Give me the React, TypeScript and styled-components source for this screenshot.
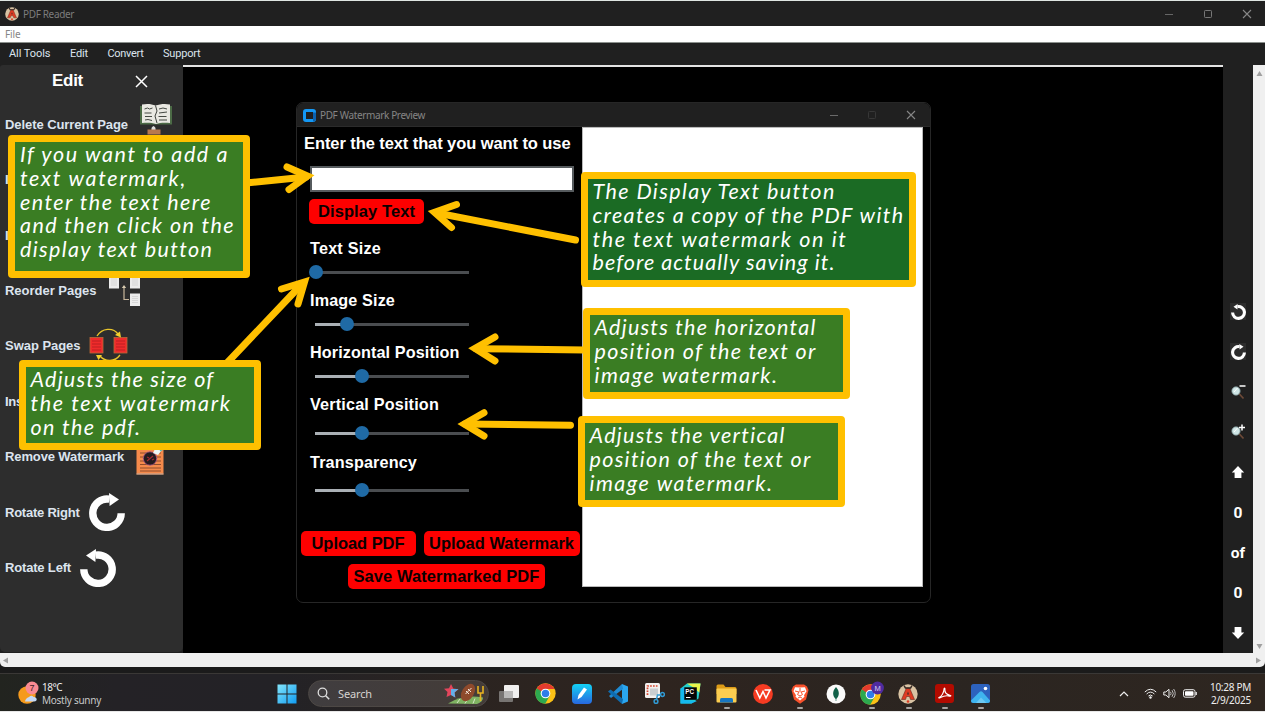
import React, { useLayoutEffect, useRef } from "react";
import styled, { createGlobalStyle } from "styled-components";

const GlobalStyle = createGlobalStyle`
  * { box-sizing: border-box; }
  html, body { margin: 0; padding: 0; background: #000; overflow: hidden; }
`;

const UI = `"Noto Sans", "Open Sans", sans-serif`;
const ARIAL = `"Liberation Sans", Arial, sans-serif`;
const YELLOW = "#ffc000";

/* ---------- text that tracks itself to a given width ---------- */

const TrackedSpan = styled.span`
  display: inline-block;
  white-space: pre;
`;

function Tracked({ width, children }: { width: number; children: string }) {
  const ref = useRef<HTMLSpanElement>(null);
  useLayoutEffect(() => {
    const el = ref.current;
    if (!el) return;
    el.style.letterSpacing = "0px";
    const natural = el.getBoundingClientRect().width;
    el.style.letterSpacing = `${(width - natural) / children.length}px`;
  }, [width, children]);
  return <TrackedSpan ref={ref}>{children}</TrackedSpan>;
}

/* ---------- application shell ---------- */

const Screen = styled.div`
  position: relative;
  width: 1265px;
  height: 712px;
  display: flex;
  flex-direction: column;
  background: #1b1b1b;
  border-top: 1px solid #dfe6e2;
  border-bottom: 1px solid #e8e8e8;
  overflow: hidden;
`;

const TitleBar = styled.header`
  flex: none;
  height: 25px;
  display: flex;
  align-items: center;
  padding: 0 13px 0 5px;
  gap: 4px;
  background: #202020;
  color: #7c7c7c;
  font: 10px/14px ${UI};
`;

const WindowControls = styled.div`
  margin-left: auto;
  display: flex;
  gap: 29px;
`;

const MenuBar = styled.div`
  flex: none;
  height: 17px;
  padding-left: 5px;
  background: #fff;
  border-bottom: 1px solid #8b908c;
  color: #868686;
  font: 10px/17px ${UI};
`;

const Toolbar = styled.nav`
  flex: none;
  height: 22px;
  display: flex;
  align-items: center;
  gap: 19.5px;
  padding-left: 9px;
  background: #202020;
  color: #dce4ee;
  font: 11px/20px Roboto, sans-serif;
`;

const Workspace = styled.main`
  flex: none;
  height: 588px;
  display: flex;
  background: #202020;
`;

const Sidebar = styled.aside`
  width: 183px;
  height: 587px;
  background: #2d2d2d;
  border-radius: 3px 3px 5px 5px;
  font-family: ${ARIAL};
  color: #dce4ee;
`;

const SidebarHeader = styled.div`
  height: 31.7px;
  display: flex;
  align-items: center;
  padding: 1px 0 0 52px;
  gap: 52px;
  font-size: 17px;
  font-weight: 700;
  color: #fff;
`;

const SidebarItem = styled.div<{ $gap: number }>`
  height: 55.4px;
  display: flex;
  align-items: center;
  padding-left: 5px;
  gap: ${(p) => p.$gap}px;
  font-size: 13px;
  font-weight: 700;
`;

const SidebarGlyph = styled.div<{ $shift?: number }>`
  display: flex;
  margin-top: ${(p) => p.$shift ?? 0}px;
`;

const Viewer = styled.section`
  flex: 1;
  background: #000;
  border-top: 2px solid #e4e4e4;
`;

const Rail = styled.div`
  width: 30px;
  padding-top: 226.5px;
  display: flex;
  flex-direction: column;
  background: #202020;
`;

const RailCell = styled.div`
  flex: none;
  height: 40.1px;
  display: flex;
  align-items: center;
  justify-content: center;
  color: #fff;
  font: 700 15.5px/18px Roboto, sans-serif;
`;

const RailCount = styled(RailCell)`
  padding-top: 2px;
`;

const RailTile = styled.div`
  display: flex;
  padding: 0.5px;
  background: #2d2d2d;
`;

const VScroll = styled.div`
  width: 12px;
  display: flex;
  flex-direction: column;
  justify-content: space-between;
  align-items: center;
  padding: 5px 0 3px;
  background: #f0f0f0;
`;

const HScroll = styled.div`
  flex: none;
  height: 14px;
  display: flex;
  justify-content: space-between;
  align-items: center;
  padding: 0 3px;
  background: #f0f0f0;
  border-radius: 0 0 5px 5px;
`;

/* ---------- dialog window ---------- */

const Dialog = styled.div`
  position: absolute;
  left: 296px;
  top: 101px;
  width: 635px;
  height: 501px;
  border: 1px solid #262626;
  border-radius: 7px;
  background: #000;
  overflow: hidden;
`;

const DialogTitle = styled.div`
  height: 24px;
  display: flex;
  align-items: center;
  gap: 4px;
  padding: 1px 14px 0 6px;
  background: #202020;
  border-bottom: 1px solid #2b2b2b;
  color: #858585;
  font: 10px/14px ${UI};
`;

const DialogControls = styled(WindowControls)`
  gap: 28.7px;
`;

const DialogBody = styled.div`
  display: flex;
`;

const Form = styled.div`
  width: 285px;
  display: flex;
  flex-direction: column;
  align-items: flex-start;
  font-family: ${ARIAL};
`;

const Preview = styled.div`
  width: 341px;
  height: 460px;
  background: #fff;
  border: 1px solid #b9b9b9;
`;

const Heading = styled.div`
  height: 33px;
  padding-left: 7px;
  display: flex;
  align-items: center;
  color: #fff;
  font-size: 16.5px;
  font-weight: 700;
`;

const TextInput = styled.input`
  width: 264px;
  height: 26px;
  margin: 6px 0 0 13px;
  border: 2px solid #565b5e;
  outline: none;
  background: #fff;
`;

const RedButton = styled.button<{ $width: number }>`
  width: ${(p) => p.$width}px;
  height: 25px;
  padding: 0;
  border: 0;
  border-radius: 5px;
  background: #fe0000;
  color: #0b0000;
  font: 700 16.5px/25px ${ARIAL};
  text-align: center;
  white-space: nowrap;
`;

const ButtonSlot = styled.div`
  padding: 7px 0 12px 12px;
  height: 44px;
`;

const Field = styled.div<{ $space: number; $gap: number }>`
  display: flex;
  flex-direction: column;
  gap: ${(p) => p.$gap}px;
  padding-left: 13px;
  margin-bottom: ${(p) => p.$space}px;
`;

const FieldLabel = styled.label`
  height: 24px;
  line-height: 24px;
  color: #fff;
  font-size: 16.2px;
  font-weight: 700;
`;

const SliderBox = styled.div`
  height: 24px;
  padding-left: 5px;
  display: flex;
  align-items: center;
`;

const Track = styled.div<{ $width: number; $filled?: boolean }>`
  width: ${(p) => p.$width}px;
  height: 3px;
  background: ${(p) => (p.$filled ? "#aab0b5" : "#4a4d50")};
`;

const Knob = styled.div`
  flex: none;
  width: 14px;
  height: 14px;
  margin: 0 -7px;
  z-index: 1;
  border-radius: 50%;
  background: #1f6aa5;
`;

const UploadRow = styled.div`
  display: flex;
  gap: 8px;
  padding: 29px 0 8px 3.5px;
`;

const SaveRow = styled.div`
  padding-left: 51px;
`;

/* ---------- callouts ---------- */

const Callout = styled.div<{ $x: number; $y: number; $w: number; $h: number; $bg?: string; $pad?: number }>`
  position: absolute;
  left: ${(p) => p.$x}px;
  top: ${(p) => p.$y}px;
  width: ${(p) => p.$w}px;
  height: ${(p) => p.$h}px;
  padding: 1px 0 0 ${(p) => p.$pad ?? 4.5}px;
  border: 7px solid ${YELLOW};
  border-radius: 4px;
  background: ${(p) => p.$bg ?? "#3a7d23"};
  color: #fff;
  font: italic 21.5px/23.8px Lato, "Open Sans", sans-serif;
  display: flex;
  flex-direction: column;
  align-items: flex-start;
`;

const CalloutLine = styled.div`
  height: 23.8px;
`;

const ArrowLayer = styled.svg`
  position: absolute;
  left: 0;
  top: -1px;
  pointer-events: none;
`;

/* ---------- taskbar ---------- */

const Taskbar = styled.footer`
  margin-top: 6px;
  flex: 1;
  position: relative;
  display: flex;
  align-items: center;
  padding-top: 2px;
  border-top: 1px solid #3a3836;
  background: linear-gradient(90deg, #22241f 0, #242226 9%, #232226 22%, #2b2421 36%, #2e241f 52%, #2b2521 75%, #2e2620 100%);
  color: #eee;
  font: 10px/13px ${UI};
`;

const Weather = styled.div`
  width: 268.7px;
  padding-left: 17px;
  display: flex;
  align-items: center;
  gap: 3px;
`;

const Lines = styled.div<{ $end?: boolean }>`
  display: flex;
  flex-direction: column;
  align-items: ${(p) => (p.$end ? "flex-end" : "flex-start")};
`;

const Muted = styled.div`
  color: #c9c9c9;
`;

const AppSlot = styled.div`
  position: relative;
  width: 36.3px;
  height: 35px;
  display: flex;
  align-items: center;
  justify-content: center;
`;

const Indicator = styled.i`
  position: absolute;
  left: 15.5px;
  bottom: 2px;
  width: 6px;
  height: 2px;
  border-radius: 1px;
  background: #a8a5a2;
`;

const SearchPill = styled.div`
  width: 181px;
  height: 27px;
  margin: 0 2px 0 3px;
  padding: 0 3px 0 8px;
  display: flex;
  align-items: center;
  gap: 8px;
  border-radius: 14px;
  border: 1px solid #4d4845;
  background: linear-gradient(90deg, #403d3f, #443c38);
  color: #d6d3d1;
  font-size: 11px;
`;

const SearchArt = styled.svg`
  margin-left: auto;
`;

const Tray = styled.div`
  margin-left: auto;
  padding-right: 14px;
  display: flex;
  align-items: center;
`;

const TrayIcon = styled.div<{ $gap: number }>`
  display: flex;
  margin-right: ${(p) => p.$gap}px;
`;

/* ---------- drawings ---------- */

const ReaderLogo = ({ size = 14 }: { size?: number }) => (
  <svg width={size} height={size} viewBox="0 0 20 20">
    <circle cx="10" cy="10" r="9.7" fill="#d9c3a3" />
    <path d="M3.5 15.5 8.4 4h3.2l4.900 11.500h-4l-1-3h-3l-1 3z" fill="#df3b22" stroke="#6b2b20" strokeWidth=".6" />
    <path d="M9 10.500h2L10 7.400z" fill="#3d2b27" />
    <path d="M7.500 4.200 6 1.500M12.500 4.200 14 1.500M7 4h6" stroke="#342824" strokeWidth="1.500" />
    <circle cx="10" cy="17.500" r="1.300" fill="#df3b22" />
  </svg>
);

const Minimize = ({ color }: { color: string }) => (
  <svg width="10" height="10"><path d="M1 5.500h8" stroke={color} /></svg>
);
const Maximize = ({ color }: { color: string }) => (
  <svg width="10" height="10"><rect x="1.500" y="1.500" width="7" height="7" rx=".8" fill="none" stroke={color} /></svg>
);
const Close = ({ color }: { color: string }) => (
  <svg width="10" height="10"><path d="m1 1 8 8M9 1 1 9" stroke={color} strokeWidth="1.100" /></svg>
);

const Turn = ({ w, h, left }: { w: number; h: number; left?: boolean }) => (
  <svg width={w} height={h} viewBox="0 0 36 38">
    <g transform={left ? "translate(36 0) scale(-1 1)" : undefined}>
      <path d="M20.500 6.200A14.200 14.200 0 1 0 32.200 20.200" fill="none" stroke="#fff" strokeWidth="7.400" />
      <path d="M20 0 30 6.600 20.600 13z" fill="#fff" />
    </g>
  </svg>
);

const BookIcon = () => (
  <svg width="34" height="38" viewBox="0 0 34 38">
    <path d="M1 3h32v18.500H1z" fill="#4c6b46" />
    <path d="M3 1.500c5-1 10-.5 13.500 1C21 1 26 .5 31 1.500V20c-5-.5-10-.5-14 1-4-1.500-9-1.500-14-1z" fill="#e9e8e2" />
    <path d="M16.500 2.500 18 8l-2 5 2 7" stroke="#3d403b" fill="none" />
    <path d="m5.500 6 3-1 2 1 3-1M5.500 10h7M6 13.500h7M6 17l3-.5 4 1M20 6l4-1 4 1M20 10l8-1M19.500 13.500h8M20 17h8" stroke="#454943" fill="none" />
    <path d="M12.500 27q-.5-3 2-4 2.500 1 2 4z" fill="#ddd" />
    <path d="M8.500 26.500h13v5h-13z" fill="#b8784e" />
  </svg>
);

const Sheet = ({ x, y }: { x: number; y: number }) => (
  <g>
    <rect x={x} y={y} width="10" height="12.500" fill="#ececec" />
    <path d={`M${x + 2} ${y + 3}h6M${x + 2} ${y + 5}h6M${x + 2} ${y + 7}h6M${x + 2} ${y + 9}h6`} stroke="#cfcfcf" strokeWidth=".7" />
  </g>
);

const ReorderIcon = () => (
  <svg width="33" height="32" viewBox="0 0 33 32">
    <Sheet x={1} y={1} />
    <Sheet x={22} y={1} />
    <Sheet x={22} y={18.500} />
    <path d="M21 24.500h-5V12" fill="none" stroke="#c9b79c" strokeWidth="1.200" />
    <path d="m13.800 13 2.200-3 2.200 3z" fill="#d8cab0" />
  </svg>
);

const RedSheet = ({ x }: { x: number }) => (
  <g>
    <rect x={x} y="9.500" width="13" height="15.500" fill="#ef2b2b" stroke="#b96a38" strokeWidth=".8" />
    <path d={`M${x + 2} 13h9M${x + 2} 16h9M${x + 2} 19h9M${x + 2} 22h9`} stroke="#b81f22" strokeWidth=".9" />
  </g>
);

const SwapIcon = () => (
  <svg width="40" height="34" viewBox="0 0 40 34">
    <RedSheet x={1} />
    <RedSheet x={25} />
    <path d="M8 8C13 0 24-1 29 6M31 27c-5 7-15 7-20 1" fill="none" stroke="#e9c52b" strokeWidth="1.300" />
    <path d="m26 7 5-3.500 1 6zM7 27l6 0-3.500 5z" fill="#f3cf2e" />
  </svg>
);

const RemoveIcon = () => (
  <svg width="28" height="36" viewBox="0 0 28 36">
    <rect x=".5" y="1" width="27" height="34.500" fill="#f58a4b" />
    <path d="M4 10h21M4 14h21M4 18h21M4 22h21M4 25.500h21M4 29h21M4 32h21" stroke="#8f4c2c" strokeWidth="1.100" />
    <path d="M.5 35h27" stroke="#b9aaa0" />
    <circle cx="14" cy="19.500" r="6.700" fill="#241b1f" stroke="#a8578a" strokeWidth=".8" />
    <path d="m11 22 6-5M11 18l2 1M16 21l2-1" stroke="#a32a30" strokeWidth="1.200" />
    <path d="m17 14 2.500-5h8L22 16z" fill="#eef6f4" />
    <path d="m24 12 3-2" stroke="#55b8b0" strokeWidth="1.500" />
  </svg>
);

const Magnifier = ({ plus }: { plus?: boolean }) => (
  <svg width="16" height="17" viewBox="0 0 16 17">
    <path d="m8.500 10 5 5.500" stroke="#6d4a38" strokeWidth="1.700" />
    <circle cx="6" cy="8" r="4.200" fill="#cfe6e6" stroke="#73898b" strokeWidth=".8" />
    <path d="m4 9 3.500-4" stroke="#fff" />
    <path d={plus ? "M9 4.500h6M12 1.500v6" : "M9.500 3h6"} stroke="#fff" strokeWidth="1.500" />
  </svg>
);

const BlockArrow = ({ down }: { down?: boolean }) => (
  <svg width="14" height="14" viewBox="0 0 14 14">
    <path d={down ? "M3.600 1h6.800v5.500H13.200L7 13 .8 6.500h2.800z" : "M3.600 13h6.800V7.500H13.200L7 1 .8 7.500h2.800z"} fill="#fff" />
  </svg>
);

const Triangle = ({ d }: { d: string }) => (
  <svg width="7" height="7"><path d={d} fill="#a0a0a0" /></svg>
);

const Chrome = () => (
  <svg width="21" height="21" viewBox="0 0 20 20">
    <circle cx="10" cy="10" r="9.700" fill="#fbc116" />
    <path d="M10 10 1.600 5.150A9.700 9.700 0 0 0 9.700 19.700L13.900 12.300z" fill="#2da94f" />
    <path d="M1.600 5.150 6 12l4-2-4-4z" fill="#2da94f" />
    <path d="M1.700 5A9.700 9.700 0 0 1 18.500 5.600H10L6 8z" fill="#e33b2e" />
    <circle cx="10" cy="10" r="4.600" fill="#fff" />
    <circle cx="10" cy="10" r="3.600" fill="#2f7de9" />
  </svg>
);

const appIcons: { icon: React.ReactNode; running?: boolean }[] = [
  {
    icon: (
      <svg width="22" height="20">
        <rect x="1" y="7" width="14" height="11" rx="1" fill="#777472" />
        <rect x="6" y="1" width="15" height="13" rx="1" fill="#f0efee" />
        <path d="M6 7h9v7H6z" fill="#b9b8b7" />
      </svg>
    ),
  },
  { icon: <Chrome /> },
  {
    icon: (
      <svg width="20" height="20" viewBox="0 0 20 20">
        <defs>
          <linearGradient id="note" x1="0" y1="0" x2="0" y2="1">
            <stop offset="0" stopColor="#13d2f5" />
            <stop offset="1" stopColor="#2867df" />
          </linearGradient>
        </defs>
        <rect width="20" height="20" rx="4" fill="url(#note)" />
        <path d="m5.500 15.500 1-4.500 5.500-7.500 3 2-5.500 7.500z" fill="#fff" />
      </svg>
    ),
  },
  {
    icon: (
      <svg width="20" height="20" viewBox="0 0 20 20">
        <path d="m14 0 6 2.500v15L14 20z" fill="#2aa6f0" />
        <path d="M14 0 1 12l2 2L15 5z" fill="#1f8ad2" />
        <path d="M14 20 0 7.500 2.500 5.500 15 15z" fill="#0e6cb0" />
      </svg>
    ),
  },
  {
    icon: (
      <svg width="21" height="21" viewBox="0 0 21 21">
        <rect x="1" y="0" width="15" height="15" rx="1.500" fill="#f2f0ef" />
        <path d="M3.500 12V3h10" fill="none" stroke="#d8462e" strokeWidth="1.700" strokeDasharray="1.700 1.200" />
        <rect x="6" y="5.500" width="8" height="7" fill="#c9cdd0" />
        <circle cx="18.500" cy="11.500" r="1.900" fill="none" stroke="#319bd5" strokeWidth="1.500" />
        <circle cx="12" cy="18.500" r="1.900" fill="none" stroke="#319bd5" strokeWidth="1.500" />
        <path d="m12.500 16.500 1-4.500h3" stroke="#319bd5" fill="none" strokeWidth="1.500" />
      </svg>
    ),
  },
  {
    icon: (
      <svg width="21" height="21" viewBox="0 0 21 21">
        <path d="M7 .5h13.500l-2 15-7 5H.5v-15z" fill="#25cfc9" />
        <path d="M7 .5h13.500l-1.200 9-6-5z" fill="#e9f54a" />
        <path d="M.5 5.500 5 4v13l12 1-5.500 2.500H.5z" fill="#15b9f0" />
        <rect x="4.300" y="4.300" width="12.500" height="12.500" fill="#050505" />
        <text x="5.300" y="10.800" fill="#fff" fontFamily="Liberation Sans, sans-serif" fontWeight="700" fontSize="6.300">PC</text>
        <path d="M6 14.500h4.500" stroke="#fff" />
      </svg>
    ),
  },
  {
    running: true,
    icon: (
      <svg width="21" height="19" viewBox="0 0 21 19">
        <path d="M.5 2q0-1.500 1.500-1.500h5.500L9.500 3H19q1.500 0 1.500 1.500V10H.5z" fill="#dd9b16" />
        <rect x=".5" y="4.500" width="20" height="14" rx="1" fill="#fccd50" />
        <path d="M4 18.500v-3q0-1.500 1.500-1.500h10q1.500 0 1.500 1.500v3z" fill="#1776c2" />
      </svg>
    ),
  },
  {
    icon: (
      <svg width="20" height="20" viewBox="0 0 20 20">
        <circle cx="10" cy="10" r="9.900" fill="#f63b22" />
        <path d="m3 6 3.800 8L10 7.500l3 6.500 4-8h-5.500" fill="none" stroke="#fff" strokeWidth="1.600" />
      </svg>
    ),
  },
  {
    running: true,
    icon: (
      <svg width="18" height="20" viewBox="0 0 18 20">
        <path d="M5 .5h8l3 2L17.500 6 15 15.500l-6 4.300-6-4.300L.5 6 2 2.500z" fill="#f8512c" />
        <path d="M9 3.500 14 3.300l1.500 4-2.500 4 .5 1.500L9 16.500l-4.500-3.700.5-1.500-2.500-4 1.500-4z" fill="#fff" />
        <path d="m4 7 4 1-1.500 2.500L9 12l2.500-1.500L10 8l4-1M9 4v4M7 14l2-1 2 1" stroke="#f8512c" fill="none" strokeWidth="1" />
      </svg>
    ),
  },
  {
    icon: (
      <svg width="20" height="20" viewBox="0 0 20 20">
        <circle cx="10" cy="10" r="9.500" fill="#fafafa" />
        <path d="M10 3c4 4.500 3.500 9 .3 12v2h-.6v-2C6.500 12 6 7.500 10 3z" fill="#116149" />
      </svg>
    ),
  },
  {
    running: true,
    icon: (
      <svg width="26" height="26" viewBox="0 0 26 26">
        <g transform="translate(1 3)"><Chrome /></g>
        <circle cx="18.500" cy="7" r="6.400" fill="#4e2ba0" />
        <text x="18.500" y="9.700" textAnchor="middle" fill="#d9cdf2" fontFamily="Liberation Sans, sans-serif" fontSize="7.500">M</text>
      </svg>
    ),
  },
  { running: true, icon: <ReaderLogo size={20} /> },
  {
    running: true,
    icon: (
      <svg width="19" height="19" viewBox="0 0 19 19">
        <rect width="19" height="19" rx="3" fill="#b30b00" />
        <path d="M4 13.500c2.500-1 5-5 5-8.500 0-1.300 1-1.300.9 0-.3 3 1.600 5.500 5 6.200 1.400.3 1.200 1.100-.2.900-3.500-.8-6-.3-9.200 1.400-1.400.8-2.200.4-1.500 0z" fill="none" stroke="#fff" strokeWidth="1.100" />
      </svg>
    ),
  },
  {
    running: true,
    icon: (
      <svg width="19" height="19" viewBox="0 0 19 19">
        <rect width="19" height="19" rx="2.500" fill="#2d62bd" />
        <path d="M0 16.500 8.500 8q1.500-1.500 3 0l7.500 8.500q0 2.500-2.500 2.500h-14Q0 19 0 16.500z" fill="#3fb4ee" />
        <path d="m5 19 5-5.500 5.500 5.500z" fill="#6cc8f2" />
        <circle cx="14.500" cy="4.500" r="1.800" fill="#fff" />
      </svg>
    ),
  },
];

const arrows = [
  { shaft: "M246 183 306 177", head: "M287 167 307.500 176 289 189.500" },
  { shaft: "M575.500 240 437 213", head: "M456.500 204.500 434.500 212.300 451.500 227.500" },
  { shaft: "M226 364 301 285", head: "M281.500 289 304.500 282 298 304" },
  { shaft: "M585 350 476 348.700", head: "M495 337 475 348.500 495 361" },
  { shaft: "M570.500 425.300 465 424", head: "M484 412.700 464.300 424 484 436" },
];

const callouts: { x: number; y: number; w: number; h: number; bg?: string; pad?: number; lines: [string, number][] }[] = [
  { x: 8, y: 134, w: 242, h: 143, pad: 5, lines: [["If you want to add a", 209], ["text watermark,", 167], ["enter the text here", 192], ["and then click on the", 215], ["display text button", 192]] },
  { x: 19, y: 359, w: 242, h: 90, lines: [["Adjusts the size of", 184], ["the text watermark", 201], ["on the pdf.", 111]] },
  { x: 581, y: 171, w: 335, h: 115, bg: "#1b6b24", lines: [["The Display Text button", 242], ["creates a copy of the PDF with", 312], ["the text watermark on it", 255], ["before actually saving it.", 243]] },
  { x: 583, y: 307, w: 267, h: 91, lines: [["Adjusts the horizontal", 222], ["position of the text or", 222], ["image watermark.", 184]] },
  { x: 578, y: 415, w: 267, h: 91, lines: [["Adjusts the vertical", 196], ["position of the text or", 222], ["image watermark.", 184]] },
];

const fields = [
  { label: "Text Size", text: 71, at: 1, space: 4, gap: 0 },
  { label: "Image Size", text: 85, at: 31.5, filled: true, space: 4, gap: 0 },
  { label: "Horizontal Position", text: 149.5, at: 46.5, filled: true, space: 4, gap: 0 },
  { label: "Vertical Position", text: 129, at: 46.5, filled: true, space: 5, gap: 5 },
  { label: "Transparency", text: 107, at: 46.5, filled: true, space: 0, gap: 4 },
];

const sidebarItems: { label: string; width: number; gap: number; icon?: React.ReactNode; shift?: number }[] = [
  { label: "Delete Current Page", width: 123, gap: 11, icon: <BookIcon />, shift: -5 },
  { label: "I", width: 4, gap: 0 },
  { label: "I", width: 4, gap: 0 },
  { label: "Reorder Pages", width: 91.5, gap: 11, icon: <ReorderIcon />, shift: 0 },
  { label: "Swap Pages", width: 75.5, gap: 8.5, icon: <SwapIcon />, shift: -2 },
  { label: "Ins", width: 18, gap: 0 },
  { label: "Remove Watermark", width: 119, gap: 12, icon: <RemoveIcon />, shift: 0 },
  { label: "Rotate Right", width: 74.5, gap: 9, icon: <Turn w={36} h={38} /> },
  { label: "Rotate Left", width: 66, gap: 9, icon: <Turn w={36} h={38} left /> },
];

export default function App() {
  return (
    <>
      <GlobalStyle />
      <Screen>
        <TitleBar>
          <ReaderLogo />
          <Tracked width={51}>PDF Reader</Tracked>
          <WindowControls>
            <Minimize color="#666" />
            <Maximize color="#777" />
            <Close color="#888" />
          </WindowControls>
        </TitleBar>
        <MenuBar><Tracked width={15.5}>File</Tracked></MenuBar>
        <Toolbar>
          <Tracked width={41.5}>All Tools</Tracked>
          <Tracked width={18}>Edit</Tracked>
          <Tracked width={36}>Convert</Tracked>
          <Tracked width={37.5}>Support</Tracked>
        </Toolbar>

        <Workspace>
          <Sidebar>
            <SidebarHeader>
              <Tracked width={31}>Edit</Tracked>
              <svg width="13" height="13"><path d="m1 1 11 11M12 1 1 12" stroke="#fff" strokeWidth="1.500" /></svg>
            </SidebarHeader>
            {sidebarItems.map((item, i) => (
              <SidebarItem key={i} $gap={item.gap}>
                <Tracked width={item.width}>{item.label}</Tracked>
                <SidebarGlyph $shift={item.shift}>{item.icon}</SidebarGlyph>
              </SidebarItem>
            ))}
          </Sidebar>
          <Viewer />
          <Rail>
            <RailCell><RailTile><Turn w={15} h={16} left /></RailTile></RailCell>
            <RailCell><RailTile><Turn w={15} h={16} /></RailTile></RailCell>
            <RailCell><Magnifier /></RailCell>
            <RailCell><Magnifier plus /></RailCell>
            <RailCell><BlockArrow /></RailCell>
            <RailCount>0</RailCount>
            <RailCount>of</RailCount>
            <RailCount>0</RailCount>
            <RailCount><BlockArrow down /></RailCount>
          </Rail>
          <VScroll>
            <Triangle d="M3.500 1 6.500 6H.5z" />
            <Triangle d="M3.500 6 6.500 1H.5z" />
          </VScroll>
        </Workspace>
        <HScroll>
          <Triangle d="M0 3.500 5 .5v6z" />
          <Triangle d="M6 3.500 1 .5v6z" />
        </HScroll>

        <Taskbar>
          <Weather>
            <svg width="22" height="25" viewBox="0 0 22 25">
              <circle cx="10" cy="14" r="8.700" fill="#f59a1d" />
              <path d="M8 20.500h9q3.500-.5 2.500-3-1-2-3-1.500-2-2.500-4.500 0-3.500 1-4 4.500z" fill="#c5d9f5" />
              <circle cx="15" cy="7" r="6.500" fill="#f98a92" />
              <text x="15" y="10.200" textAnchor="middle" fill="#3a2024" fontFamily="Liberation Sans, sans-serif" fontSize="9">7</text>
            </svg>
            <Lines>
              <Tracked width={20}>18°C</Tracked>
              <Muted><Tracked width={59}>Mostly sunny</Tracked></Muted>
            </Lines>
          </Weather>
          <AppSlot>
            <svg width="20" height="20" viewBox="0 0 20 20">
              <defs>
                <linearGradient id="win" x1="0" y1="0" x2="1" y2="1">
                  <stop offset="0" stopColor="#83e6fc" />
                  <stop offset="1" stopColor="#109bf0" />
                </linearGradient>
              </defs>
              <path d="M.5.500h9v9h-9zM10.500.500h9v9h-9zM.5 10.500h9v9h-9zM10.500 10.500h9v9h-9z" fill="url(#win)" />
            </svg>
          </AppSlot>
          <SearchPill>
            <svg width="13" height="13" viewBox="0 0 13 13">
              <circle cx="5.500" cy="5.500" r="4.300" fill="none" stroke="#ddd" strokeWidth="1.300" />
              <path d="m8.700 8.700 3.500 3.500" stroke="#ddd" strokeWidth="1.500" />
            </svg>
            <Tracked width={34}>Search</Tracked>
            <SearchArt width="42" height="23" viewBox="0 0 42 23">
              <path d="M5 21.500Q20 12 40 15.500q0 4-6 6.500z" fill="#7fb262" />
              <path d="m14 21 3-4M22 21.500l3-5M30 21.500l2-5" stroke="#d6e7c7" />
              <path d="m8 2 2.300 4.500 5.200.7-4 3.300.8 5L8 13l-4.500 2 1-5L1 6.800l5-.5z" fill="#e2465c" />
              <path d="M8 7 15.500 7l-4 3.500.8 5L8 13z" fill="#62aee8" />
              <ellipse cx="25" cy="10.500" rx="6" ry="9.500" transform="rotate(32 25 10.500)" fill="#8e4a2c" />
              <path d="m22.500 12 6-6M23 9l3 3M25 7l3 3" stroke="#f4e8df" />
              <path d="M35 4v7h5V4M37.500 11v8" fill="none" stroke="#e7b321" strokeWidth="1.600" />
            </SearchArt>
          </SearchPill>
          {appIcons.map((app, i) => (
            <AppSlot key={i}>
              {app.icon}
              {app.running && <Indicator />}
            </AppSlot>
          ))}
          <Tray>
            <TrayIcon $gap={15}>
              <svg width="10" height="6"><path d="m1 5 4-4 4 4" fill="none" stroke="#eee" strokeWidth="1.200" /></svg>
            </TrayIcon>
            <TrayIcon $gap={6}>
              <svg width="13" height="11" viewBox="0 0 13 11">
                <path d="M.8 4Q6.500-1.500 12.200 4M2.600 6Q6.500 2.200 10.400 6M4.400 8Q6.500 6 8.600 8" fill="none" stroke="#eee" />
                <circle cx="6.500" cy="9.500" r="1.200" fill="#eee" />
              </svg>
            </TrayIcon>
            <TrayIcon $gap={7}>
              <svg width="13" height="11" viewBox="0 0 13 11">
                <path d="M.8 4h2L6 1.300v8.400L2.800 7h-2z" fill="none" stroke="#eee" />
                <path d="M7.500 3.800q1.200 1.700 0 3.400M9 2.200q2.600 3.300 0 6.600M10.600 1q3.200 4.500 0 9" fill="none" stroke="#ccc" strokeWidth=".9" />
              </svg>
            </TrayIcon>
            <TrayIcon $gap={13}>
              <svg width="14" height="9" viewBox="0 0 14 9">
                <rect x=".5" y=".7" width="11.500" height="7.500" rx="1.800" fill="none" stroke="#eee" />
                <rect x="2" y="2.200" width="8.500" height="4.500" rx=".8" fill="#fff" />
                <path d="M13.200 3v3" stroke="#eee" strokeWidth="1.300" />
              </svg>
            </TrayIcon>
            <Lines $end>
              <Tracked width={41}>10:28 PM</Tracked>
              <Tracked width={40}>2/9/2025</Tracked>
            </Lines>
          </Tray>
        </Taskbar>

        <Dialog>
          <DialogTitle>
            <svg width="13" height="13" viewBox="0 0 13 13">
              <rect x="1.500" y="1.500" width="10" height="10" rx="1.500" fill="none" stroke="#1498f5" strokeWidth="3" />
              <path d="M10 3.500h3v6q0 3-3 3z" fill="#0b62b0" />
            </svg>
            <Tracked width={105}>PDF Watermark Preview</Tracked>
            <DialogControls>
              <Minimize color="#6a6a6a" />
              <Maximize color="#373737" />
              <Close color="#858585" />
            </DialogControls>
          </DialogTitle>
          <DialogBody>
            <Form>
              <Heading><Tracked width={266.5}>Enter the text that you want to use</Tracked></Heading>
              <TextInput />
              <ButtonSlot>
                <RedButton $width={115}><Tracked width={97}>Display Text</Tracked></RedButton>
              </ButtonSlot>
              {fields.map((f) => (
                <Field key={f.label} $space={f.space} $gap={f.gap}>
                  <FieldLabel><Tracked width={f.text}>{f.label}</Tracked></FieldLabel>
                  <SliderBox>
                    <Track $width={f.at} $filled={f.filled} />
                    <Knob />
                    <Track $width={154 - f.at} />
                  </SliderBox>
                </Field>
              ))}
              <UploadRow>
                <RedButton $width={115}><Tracked width={93}>Upload PDF</Tracked></RedButton>
                <RedButton $width={156}><Tracked width={145}>Upload Watermark</Tracked></RedButton>
              </UploadRow>
              <SaveRow>
                <RedButton $width={197}><Tracked width={186}>Save Watermarked PDF</Tracked></RedButton>
              </SaveRow>
            </Form>
            <Preview />
          </DialogBody>
        </Dialog>

        <ArrowLayer width="1265" height="712" fill="none" stroke={YELLOW} strokeWidth="7" strokeLinecap="round">
          {arrows.map((a) => (
            <g key={a.shaft}>
              <path d={a.shaft} />
              <path d={a.head} strokeLinejoin="miter" />
            </g>
          ))}
        </ArrowLayer>

        {callouts.map((c) => (
          <Callout key={`${c.x}-${c.y}`} $x={c.x} $y={c.y} $w={c.w} $h={c.h} $bg={c.bg} $pad={c.pad}>
            {c.lines.map(([text, width]) => (
              <CalloutLine key={text}><Tracked width={width}>{text}</Tracked></CalloutLine>
            ))}
          </Callout>
        ))}
      </Screen>
    </>
  );
}
